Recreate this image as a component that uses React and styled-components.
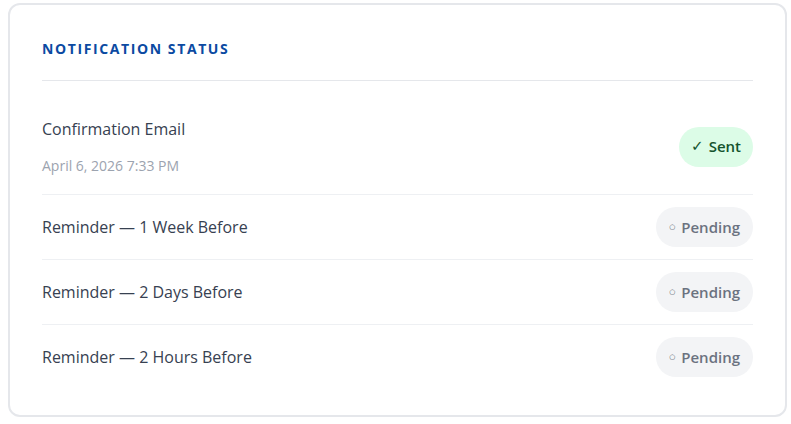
import styled, { createGlobalStyle } from "styled-components";

const GlobalStyle = createGlobalStyle`
  * {
    box-sizing: border-box;
  }

  body {
    margin: 0;
    background: #ffffff;
    font-family: "Open Sans", "Noto Sans", sans-serif;
  }
`;

const Page = styled.div`
  padding: 3px 4px 0 8px;
`;

const Card = styled.section`
  border: 2px solid #e5e7eb;
  border-radius: 12px;
  background: #ffffff;
  padding: 33px 32px 26px;
`;

const Header = styled.header`
  padding-bottom: 21px;
  border-bottom: 1px solid #e5e7eb;
  margin-bottom: 18px;
`;

const Title = styled.h2`
  margin: 0;
  font-size: 14px;
  line-height: 21px;
  font-weight: 700;
  letter-spacing: 1.6px;
  text-transform: uppercase;
  color: #0b4aa2;
`;

const List = styled.ul`
  list-style: none;
  margin: 0;
  padding: 0;
`;

const Row = styled.li`
  display: flex;
  align-items: center;
  justify-content: space-between;
  gap: 16px;
  padding: ${(p) => (p.$tall ? "18px 0" : "12px 0")};
  border-bottom: ${(p) => (p.$last ? "none" : "1px solid #eef0f3")};
`;

const Info = styled.div`
  display: flex;
  flex-direction: column;
  gap: 14px;
`;

const Name = styled.span`
  font-size: 16px;
  line-height: 24px;
  color: #374151;
`;

const Meta = styled.span`
  font-size: 14px;
  line-height: 21px;
  color: #9ca3af;
`;

const Badge = styled.span`
  display: inline-flex;
  align-items: center;
  gap: ${(p) => (p.$sent ? "5px" : "6px")};
  padding: 9.5px ${(p) => (p.$sent ? "12px" : "13px")};
  border-radius: 999px;
  font-size: 15px;
  line-height: 21px;
  font-weight: 600;
  white-space: nowrap;
  color: ${(p) => (p.$sent ? "#14532d" : "#6b7280")};
  background: ${(p) => (p.$sent ? "#dcfce7" : "#f3f4f6")};
`;

const Mark = styled.span`
  font-family: "DejaVu Sans", sans-serif;
  font-size: ${(p) => (p.$small ? "7px" : "15px")};
  font-weight: ${(p) => (p.$small ? 400 : 700)};
  color: ${(p) => (p.$small ? "#4b5563" : "#14532d")};
`;

const reminders = [
  "Reminder — 1 Week Before",
  "Reminder — 2 Days Before",
  "Reminder — 2 Hours Before",
];

export default function App() {
  return (
    <>
      <GlobalStyle />
      <Page>
        <Card>
          <Header>
            <Title>Notification Status</Title>
          </Header>
          <List>
            <Row $tall>
              <Info>
                <Name>Confirmation Email</Name>
                <Meta>April 6, 2026 7:33 PM</Meta>
              </Info>
              <Badge $sent>
                <Mark>✓</Mark>Sent
              </Badge>
            </Row>
            {reminders.map((r, i) => (
              <Row key={r} $last={i === reminders.length - 1}>
                <Name>{r}</Name>
                <Badge>
                  <Mark $small>○</Mark>Pending
                </Badge>
              </Row>
            ))}
          </List>
        </Card>
      </Page>
    </>
  );
}
